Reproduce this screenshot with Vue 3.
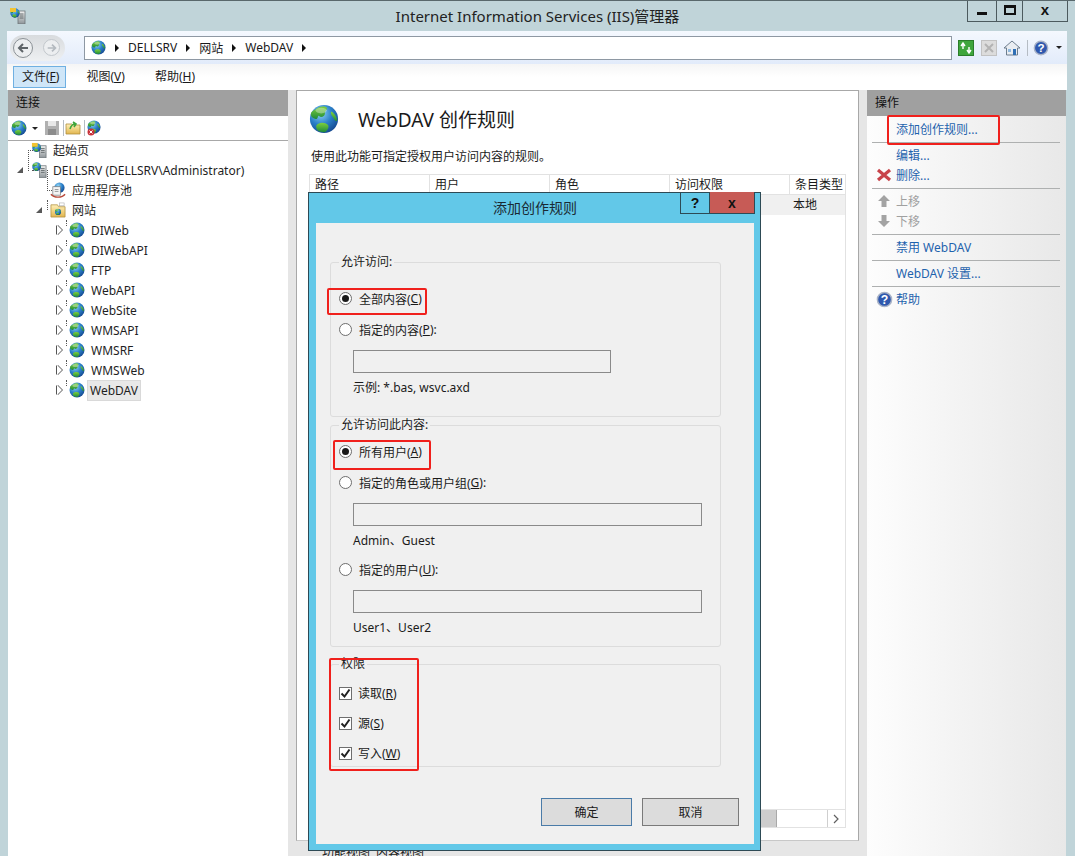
<template>
  <div class="window">
    <svg class="defs" width="0" height="0" aria-hidden="true">
      <defs>
        <radialGradient id="sea" cx="0.38" cy="0.3" r="0.8">
          <stop offset="0" stop-color="#8fd4f5" />
          <stop offset="0.5" stop-color="#2a7fc8" />
          <stop offset="1" stop-color="#123f86" />
        </radialGradient>
        <linearGradient id="land" x1="0" y1="0" x2="0" y2="1">
          <stop offset="0" stop-color="#7fd03c" />
          <stop offset="1" stop-color="#1f8a3a" />
        </linearGradient>
        <linearGradient id="boxfill" x1="0" y1="0" x2="0" y2="1">
          <stop offset="0" stop-color="#f2f2f2" />
          <stop offset="1" stop-color="#8d9498" />
        </linearGradient>
        <linearGradient id="folderfill" x1="0" y1="0" x2="0" y2="1">
          <stop offset="0" stop-color="#fff0b8" />
          <stop offset="1" stop-color="#e2b64f" />
        </linearGradient>
        <symbol id="globe" viewBox="0 0 32 32">
          <circle cx="16" cy="16" r="15" fill="url(#sea)" />
          <path d="M8 5c4-3 9-3 11-1 1 2-2 3-2 6s-4 5-6 3-1 4-4 3-5-2-5-5 3-4 6-6z" fill="url(#land)" />
          <path d="M24 8c3 2 6 6 6 10-2 1-3-1-4-3s-4-5-2-7z" fill="url(#land)" />
          <path d="M10 21c3-2 8-1 10 1s0 6-3 8c-4 0-8-1-9-4s0-4 2-5z" fill="url(#land)" />
          <ellipse cx="13" cy="7" rx="6" ry="3" fill="#fff" opacity=".35" />
        </symbol>
        <symbol id="server" viewBox="0 0 17 17">
          <rect x="9" y="4" width="7" height="13" fill="url(#boxfill)" stroke="#6d7478" stroke-width=".8" />
          <path d="M10.5 7h4M10.5 9h4M10.5 11h4" stroke="#4e5558" stroke-width=".8" />
          <use href="#globe" x="1" y="0" width="10" height="10" />
        </symbol>
        <symbol id="startpage" viewBox="0 0 17 17">
          <rect x="9" y="4" width="7" height="13" fill="url(#boxfill)" stroke="#6d7478" stroke-width=".8" />
          <path d="M10.5 7h4M10.5 9h4M10.5 11h4" stroke="#4e5558" stroke-width=".8" />
          <use href="#globe" x="1" y="1" width="10" height="10" />
          <path d="M1 1h6v4H1z" fill="#f2c432" />
        </symbol>
        <symbol id="pool" viewBox="0 0 17 17">
          <circle cx="10" cy="6" r="5.5" fill="url(#sea)" />
          <rect x="3" y="5" width="8" height="9" fill="#f4f4f4" stroke="#7b7f82" stroke-width=".8" />
          <path d="M5 8h4M5 10h4" stroke="#7b7f82" stroke-width=".8" />
          <path d="M1 13c3 4 12 4 15 0" fill="none" stroke="#b94a3a" stroke-width="1.4" />
        </symbol>
        <symbol id="sitefolder" viewBox="0 0 17 17">
          <path d="M1 3h7l1 2h7v11H1z" fill="url(#folderfill)" stroke="#b08f3f" stroke-width=".8" />
          <rect x="10" y="1" width="5" height="3" fill="#fff" stroke="#a9a9a9" stroke-width=".6" />
          <use href="#globe" x="5" y="7" width="7" height="7" />
        </symbol>
        <symbol id="help" viewBox="0 0 18 18">
          <circle cx="9" cy="9" r="7.5" fill="#2f58ae" stroke="#a9b3c7" stroke-width="1.6" />
          <text x="9" y="13.4" text-anchor="middle" class="help-q">?</text>
        </symbol>
      </defs>
    </svg>

    <header class="titlebar">
      <svg class="title-icon" width="17" height="17"><use href="#startpage" /></svg>
      <div class="title-text">Internet Information Services (IIS)管理器</div>
      <div class="win-controls">
        <button class="win-btn min"><span class="bar"></span></button>
        <button class="win-btn max"><span class="square"></span></button>
        <button class="win-btn close">x</button>
      </div>
    </header>

    <div class="navbar">
      <div class="nav-pill">
        <span class="nav-circle">
          <svg width="14" height="14" viewBox="0 0 14 14"><path d="M12 7H3M7 3 3 7l4 4" fill="none" stroke="#5e6468" stroke-width="2" /></svg>
        </span>
        <span class="nav-circle off">
          <svg width="12" height="12" viewBox="0 0 14 14"><path d="M2 7h9M7 3l4 4-4 4" fill="none" stroke="#b4bac0" stroke-width="2" /></svg>
        </span>
      </div>
      <div class="address">
        <svg width="15" height="15"><use href="#globe" /></svg>
        <template v-for="part in crumbs" :key="part">
          <span class="crumb-arrow"></span>
          <span class="crumb">{{ part }}</span>
        </template>
        <span class="crumb-arrow"></span>
      </div>
      <div class="nav-tools">
        <svg width="16" height="16" viewBox="0 0 16 16">
          <rect x=".5" y=".5" width="15" height="15" fill="#3fa63c" stroke="#2b7d2b" />
          <path d="M3 6l2-3 2 3M5 3v6M9 10l2 3 2-3M11 13V7" fill="none" stroke="#fff" stroke-width="1.4" />
        </svg>
        <svg width="16" height="16" viewBox="0 0 16 16">
          <rect x=".5" y=".5" width="15" height="15" fill="#dcdcdc" stroke="#c2c2c2" />
          <path d="M4 4l8 8M12 4l-8 8" stroke="#b3b3b3" stroke-width="2" />
        </svg>
        <svg width="16" height="16" viewBox="0 0 16 16">
          <path d="M8 1 0 8h2.500v7h11V8H16z" fill="#e9edf2" stroke="#6d7d8d" />
          <rect x="9" y="9" width="3" height="6" fill="#2f6fb5" />
          <rect x="4" y="9" width="3" height="3" fill="#8fb9df" />
        </svg>
        <span class="tool-sep"></span>
        <svg width="16" height="16"><use href="#help" /></svg>
        <span class="caret"></span>
      </div>
    </div>

    <nav class="menubar">
      <span class="menu-item active">文件(<u>F</u>)</span>
      <span class="menu-item">视图(<u>V</u>)</span>
      <span class="menu-item">帮助(<u>H</u>)</span>
    </nav>

    <div class="panes">
      <aside class="left-pane">
        <div class="pane-head">连接</div>
        <div class="left-tools">
          <svg width="16" height="16"><use href="#globe" /></svg>
          <span class="caret small"></span>
          <svg class="gap-l" width="16" height="16" viewBox="0 0 16 16">
            <rect x="1" y="1" width="14" height="14" fill="#b0b0b0" />
            <rect x="4" y="1" width="8" height="5" fill="#e8e8e8" />
            <rect x="4" y="9" width="8" height="6" fill="#8c8c8c" />
          </svg>
          <span class="tool-sep"></span>
          <svg width="16" height="16" viewBox="0 0 16 16">
            <path d="M1 4h6l1 1h7v9H1z" fill="url(#folderfill)" stroke="#b08f3f" stroke-width=".8" />
            <path d="M5 9c1-3 3-5 5-5M8 2l3 2-2 3" fill="none" stroke="#3fa63c" stroke-width="1.600" />
          </svg>
          <span class="tool-sep"></span>
          <svg width="17" height="16" viewBox="0 0 17 16">
            <use href="#globe" x="1" y="0" width="14" height="14" />
            <circle cx="5" cy="12" r="3.500" fill="#c8323a" />
            <path d="M3.500 10.500l3 3M6.500 10.500l-3 3" stroke="#fff" />
          </svg>
        </div>
        <div class="tree">
          <div v-for="node in treeNodes" :key="node.label" class="tree-row" :class="['level' + node.level, node.line]">
            <span class="twist" :class="node.twist"></span>
            <svg class="tree-icon" width="16" height="16"><use :href="'#' + node.icon" /></svg>
            <span class="tree-label" :class="{ selected: node.selected }">{{ node.label }}</span>
          </div>
        </div>
      </aside>

      <main class="center-col">
        <section class="center-pane">
          <div class="page-head">
            <svg width="30" height="32"><use href="#globe" /></svg>
            <h1>WebDAV 创作规则</h1>
          </div>
          <p class="page-desc">使用此功能可指定授权用户访问内容的规则。</p>
          <div class="rule-table">
            <div class="thead">
              <span v-for="col in columns" :key="col">{{ col }}</span>
            </div>
            <div class="tbody-row"><span class="cell-last">本地</span></div>
            <div class="table-fill"></div>
            <div class="hscroll">
              <span class="hscroll-thumb"></span>
              <span class="hscroll-track"></span>
              <span class="hscroll-btn">
                <svg width="7" height="10" viewBox="0 0 7 10"><path d="M1 1l4 4-4 4" fill="none" stroke="#606060" stroke-width="1.200" /></svg>
              </span>
            </div>
          </div>
        </section>
        <div class="view-tabs">
          <span class="view-tab">功能视图</span>
          <span class="view-tab">内容视图</span>
        </div>
      </main>

      <aside class="right-pane">
        <div class="pane-head">操作</div>
        <div class="actions">
          <template v-for="group in actionGroups" :key="group[0].label">
            <div class="action-group">
              <div v-for="item in group" :key="item.label" class="action" :class="{ disabled: item.disabled }">
                <span class="action-icon">
                  <svg v-if="item.icon === 'del'" width="16" height="16" viewBox="0 0 16 16">
                    <path d="M2 3l12 10M14 3 2 13" stroke="#c8434a" stroke-width="3.200" />
                  </svg>
                  <svg v-else-if="item.icon === 'up'" width="14" height="14" viewBox="0 0 14 14">
                    <path d="M7 1l6 6H9.500v6h-5V7H1z" fill="#a3a3a3" />
                  </svg>
                  <svg v-else-if="item.icon === 'down'" width="14" height="14" viewBox="0 0 14 14">
                    <path d="M7 13l6-6H9.500V1h-5v6H1z" fill="#a3a3a3" />
                  </svg>
                  <svg v-else-if="item.icon === 'help'" width="17" height="17"><use href="#help" /></svg>
                </span>
                <span>{{ item.label }}</span>
              </div>
            </div>
          </template>
        </div>
      </aside>
    </div>

    <section class="dialog">
      <div class="dlg-title">
        <span class="dlg-title-text">添加创作规则</span>
        <div class="dlg-btns">
          <button class="dlg-btn">?</button>
          <button class="dlg-btn dlg-close">x</button>
        </div>
      </div>
      <div class="dlg-body">
        <fieldset class="group g-access">
          <legend>允许访问:</legend>
          <label class="opt"><span class="radio on"></span>全部内容(<u>C</u>)</label>
          <label class="opt"><span class="radio"></span>指定的内容(<u>P</u>):</label>
          <div class="field narrow"></div>
          <div class="hint">示例: *.bas, wsvc.axd</div>
        </fieldset>
        <fieldset class="group g-users">
          <legend>允许访问此内容:</legend>
          <label class="opt"><span class="radio on"></span>所有用户(<u>A</u>)</label>
          <label class="opt"><span class="radio"></span>指定的角色或用户组(<u>G</u>):</label>
          <div class="field"></div>
          <div class="hint">Admin、Guest</div>
          <label class="opt after-hint"><span class="radio"></span>指定的用户(<u>U</u>):</label>
          <div class="field"></div>
          <div class="hint">User1、User2</div>
        </fieldset>
        <fieldset class="group g-perm">
          <legend>权限</legend>
          <label v-for="p in permissions" :key="p.key" class="opt">
            <span class="check">
              <svg width="11" height="11" viewBox="0 0 11 11"><path d="M1.500 5.500l3 3 5-7" fill="none" stroke="#222" stroke-width="2" /></svg>
            </span>{{ p.text }}(<u>{{ p.key }}</u>)
          </label>
        </fieldset>
        <div class="dlg-actions">
          <button class="push primary">确定</button>
          <button class="push">取消</button>
        </div>
      </div>
    </section>

    <span class="mark mark-add"></span>
    <span class="mark mark-all"></span>
    <span class="mark mark-users"></span>
    <span class="mark mark-perm"></span>
  </div>
</template>

<script setup>
const crumbs = ['DELLSRV', '网站', 'WebDAV']
const columns = ['路径', '用户', '角色', '访问权限', '条目类型']

const sites = ['DIWeb', 'DIWebAPI', 'FTP', 'WebAPI', 'WebSite', 'WMSAPI', 'WMSRF', 'WMSWeb', 'WebDAV']

const treeNodes = [
  { label: '起始页', level: 0, icon: 'startpage', line: 'line-start' },
  { label: 'DELLSRV (DELLSRV\\Administrator)', level: 0, icon: 'server', twist: 'open', line: 'line-server' },
  { label: '应用程序池', level: 1, icon: 'pool', line: 'line-pool' },
  { label: '网站', level: 1, icon: 'sitefolder', twist: 'open', line: 'line-sites' },
  ...sites.map((label) => ({
    label,
    level: 2,
    icon: 'globe',
    twist: 'closed',
    line: 'line-site',
    selected: label === 'WebDAV'
  }))
]

const actionGroups = [
  [{ label: '添加创作规则...' }],
  [{ label: '编辑...' }, { label: '删除...', icon: 'del' }],
  [{ label: '上移', icon: 'up', disabled: true }, { label: '下移', icon: 'down', disabled: true }],
  [{ label: '禁用 WebDAV' }],
  [{ label: 'WebDAV 设置...' }],
  [{ label: '帮助', icon: 'help' }]
]

const permissions = [
  { text: '读取', key: 'R' },
  { text: '源', key: 'S' },
  { text: '写入', key: 'W' }
]
</script>

<style>
html, body { margin: 0; padding: 0; overflow: hidden; }
</style>

<style scoped>
.window {
  position: relative;
  width: 1075px;
  height: 856px;
  overflow: hidden;
  display: flex;
  flex-direction: column;
  box-sizing: border-box;
  background: #c0d4d9;
  border-top: 1px solid #59686c;
  font-family: "Noto Sans", "Noto Sans CJK SC", sans-serif;
  font-size: 12px;
  color: #1a1a1a;
}
.defs { position: absolute; }
.help-q { font: bold 13px "Liberation Sans", sans-serif; fill: #fff; }

.titlebar {
  position: relative;
  height: 30px;
  flex: none;
  display: flex;
  align-items: center;
  padding-left: 9px;
}
.title-text {
  position: absolute;
  left: 0;
  right: 0;
  top: 5px;
  text-align: center;
  font-size: 15px;
  line-height: 20px;
  color: #222;
}
.title-icon { margin-top: -1px; }
.win-controls {
  position: absolute;
  right: 7px;
  top: -1px;
  display: flex;
  height: 22px;
  border: 1px solid #4c5a5e;
  border-top: 0;
  box-sizing: border-box;
}
.win-btn {
  border: 0;
  padding: 0;
  background: transparent;
  display: flex;
  align-items: center;
  justify-content: center;
  font: bold 15px "Liberation Sans", sans-serif;
  color: #111;
}
.win-btn + .win-btn { border-left: 1px solid #4c5a5e; }
.win-btn.min { width: 28px; }
.win-btn.max { width: 26px; }
.win-btn.close { width: 45px; padding-bottom: 3px; }
.bar { width: 10px; height: 3px; background: #111; margin-top: 5px; }
.square { width: 8px; height: 5px; border: 2px solid #111; border-top-width: 3px; margin-bottom: 2px; }

.navbar {
  flex: none;
  height: 33px;
  margin: 0 8px 0 7px;
  display: flex;
  align-items: center;
  background: linear-gradient(#f4f8fe, #e2ebfa);
  box-sizing: border-box;
  padding-left: 3px;
}
.nav-pill {
  width: 55px;
  height: 26px;
  border-radius: 13px;
  background: linear-gradient(#d8dbde, #eef0f2);
  display: flex;
  align-items: center;
  gap: 10px;
  padding-left: 3px;
  box-sizing: border-box;
}
.nav-circle {
  width: 20px;
  height: 20px;
  border: 1.500px solid #8b9196;
  border-radius: 50%;
  background: #eceef0;
  display: flex;
  align-items: center;
  justify-content: center;
  box-sizing: border-box;
}
.nav-circle.off { width: 17px; height: 17px; border-color: #c2c7cc; }
.address {
  margin-left: 19px;
  width: 868px;
  height: 24px;
  box-sizing: border-box;
  background: #fff;
  border: 1px solid #8e98a3;
  display: flex;
  align-items: center;
  padding-left: 6px;
}
.crumb-arrow {
  width: 0;
  height: 0;
  margin: 0 9px 0 9px;
  border-left: 4px solid #111;
  border-top: 4px solid transparent;
  border-bottom: 4px solid transparent;
}
.crumb { font-size: 12px; }
.nav-tools {
  margin-left: 6px;
  display: flex;
  align-items: center;
  gap: 7px;
}
.tool-sep { width: 1px; height: 16px; background: #b5bcc4; margin: 0 -2px 0 0; }
.caret {
  width: 0;
  height: 0;
  border-top: 3px solid #222;
  border-left: 3px solid transparent;
  border-right: 3px solid transparent;
}
.caret.small { margin-left: 2px; }

.menubar {
  flex: none;
  height: 26px;
  margin: 0 8px 0 7px;
  background: linear-gradient(#f5f5f5, #fff 50%);
  display: flex;
  align-items: center;
  padding-left: 6px;
  box-sizing: border-box;
  gap: 20px;
}
.menu-item { padding: 0 9px 0 8px; line-height: 20px; height: 20px; border: 1px solid transparent; margin-right: -9px; }
.menu-item.active { background: #cfe6f8; border-color: #6fb0e2; margin-right: -9px; padding: 0 6px 0 8px; margin-left: 0; }

.panes {
  flex: 1;
  min-height: 0;
  margin-left: 8px;
  margin-right: 9px;
  display: grid;
  grid-template-columns: 280px 8px 563px 8px 199px;
  background: #e6e6e6;
}
.left-pane { grid-column: 1; background: #fff; display: flex; flex-direction: column; }
.center-col { grid-column: 3; display: flex; flex-direction: column; min-height: 0; }
.right-pane {
  grid-column: 5;
  display: flex;
  flex-direction: column;
  background: linear-gradient(90deg, #fdfdfd, #e8e8e8);
}
.pane-head {
  height: 26px;
  flex: none;
  background: #a0a0a0;
  line-height: 26px;
  padding-left: 8px;
  color: #111;
}
.left-tools {
  height: 24px;
  flex: none;
  display: flex;
  align-items: center;
  padding-left: 3px;
  gap: 3px;
  border-bottom: 1px solid #a8a8a8;
}
.gap-l { margin-left: 3px; }

.tree { padding-top: 0; }
.tree-row {
  position: relative;
  height: 20px;
  display: flex;
  align-items: center;
  box-sizing: border-box;
  white-space: nowrap;
}
.tree-row:first-child { margin-top: -1px; }
.level0 { padding-left: 7px; }
.level1 { padding-left: 26px; }
.level2 { padding-left: 45px; }
.twist { width: 14px; height: 10px; flex: none; margin-right: 2px; position: relative; z-index: 1; }
.twist.open::before {
  content: "";
  position: absolute;
  left: 2px;
  top: 2px;
  border-bottom: 6px solid #595959;
  border-left: 6px solid transparent;
}
.twist.closed::before {
  content: "";
  position: absolute;
  left: 4px;
  top: 0;
  border-left: 5px solid #fff;
  border-top: 5px solid transparent;
  border-bottom: 5px solid transparent;
  filter: drop-shadow(1px 0 0 #555) drop-shadow(-1px 0 0 #555);
}
.tree-icon { flex: none; margin-right: 5px; position: relative; z-index: 1; }
.tree-label { line-height: 19px; padding: 0 1px; color: #1f1f1f; }
.tree-label.selected { background: #e8e8e8; border: 1px solid #d9d9d9; margin-left: -3px; padding: 0 2px; }
.tree-row::before, .tree-row::after { content: ""; position: absolute; }
.line-start::before { left: 20px; top: 10px; width: 10px; height: 20px; border-left: 1px dotted #555; border-top: 1px dotted #555; }
.line-server::before { left: 24px; top: 10px; width: 6px; border-top: 1px dotted #555; }
.line-pool::before { left: 39px; top: 0; width: 10px; height: 20px; border-left: 1px dotted #555; border-bottom: 1px dotted #555; transform: translateY(-10px); }
.line-sites::before { left: 39px; top: 0; height: 10px; border-left: 1px dotted #555; }
.line-sites::after { left: 46px; top: 10px; width: 4px; border-top: 1px dotted #555; }
.line-site::before { left: 58px; top: 0; height: 6px; border-left: 1px dotted #555; }
.line-site::after { left: 63px; top: 10px; width: 5px; border-top: 1px dotted #555; }

.center-pane {
  flex: 1;
  min-height: 0;
  background: #fff;
  border: 1px solid #a8a8a8;
  border-bottom-color: #c8c8c8;
  box-sizing: border-box;
  display: flex;
  flex-direction: column;
  padding: 12px 12px 12px 12px;
}
.page-head { display: flex; align-items: center; gap: 19px; height: 32px; }
.page-head h1 { margin: 0; font-size: 19px; font-weight: 400; color: #1a1a1a; }
.page-desc { margin: 14px 0 0 2px; line-height: 16px; }
.rule-table {
  flex: 1;
  min-height: 0;
  margin-top: 9px;
  border: 1px solid #e2e2e2;
  display: flex;
  flex-direction: column;
}
.thead {
  height: 19px;
  flex: none;
  display: grid;
  grid-template-columns: 120px 120px 120px 120px 1fr;
  border-bottom: 1px solid #e2e2e2;
  line-height: 19px;
}
.thead span { padding-left: 5px; border-right: 1px solid #e2e2e2; }
.thead span:last-child { border-right: 0; }
.tbody-row { height: 20px; flex: none; background: #f0f0f0; display: flex; justify-content: flex-end; line-height: 20px; }
.cell-last { width: 52px; }
.table-fill { flex: 1; }
.hscroll { height: 17px; flex: none; display: flex; border-top: 1px solid #e2e2e2; margin-top: auto; }
.hscroll-thumb { width: 466px; background: #cdcdcd; border-right: 1px solid #a9a9a9; }
.hscroll-track { flex: 1; }
.hscroll-btn { width: 17px; border-left: 1px solid #cfcfcf; display: flex; align-items: center; justify-content: center; }

.view-tabs {
  flex: none;
  height: 15px;
  display: flex;
  gap: 6px;
  padding-left: 26px;
  overflow: hidden;
}
.view-tab { line-height: 22px; padding-top: 1px; }

.actions { padding-top: 1px; }
.action-group { padding: 2px 0 3px; margin: 0 6px 0 5px; border-bottom: 1px solid #aeb0b0; }
.action-group:last-child { border-bottom: 0; }
.action {
  height: 20px;
  display: flex;
  align-items: center;
  color: #1f63ad;
}
.action.disabled { color: #a0a0a0; }
.action-icon { width: 24px; display: flex; justify-content: center; align-items: center; flex: none; margin-right: 0; }

.dialog {
  position: absolute;
  left: 308px;
  top: 191px;
  width: 453px;
  height: 659px;
  box-sizing: border-box;
  background: #62c8e8;
  border: 1px solid #2d4a55;
  display: flex;
  flex-direction: column;
  padding: 0 6px 6px 7px;
}
.dlg-title {
  position: relative;
  height: 30px;
  flex: none;
  text-align: center;
  line-height: 30px;
  font-size: 14px;
  color: #1a2a33;
}
.dlg-btns { position: absolute; right: -1px; top: -1px; height: 21px; display: flex; border: 1px solid #2d4a55; border-top: 0; }
.dlg-btn { width: 28px; border: 0; padding: 0; background: transparent; font: bold 14px "Liberation Sans", sans-serif; color: #111; }
.dlg-close { width: 45px; background: #c75b56; border-left: 1px solid #2d4a55; }
.dlg-body {
  flex: 1;
  min-height: 0;
  background: #f0f0f0;
  padding: 31px 33px 0 14px;
  display: flex;
  flex-direction: column;
  box-sizing: border-box;
}
.group {
  margin: 0;
  border: 1px solid #dcdcdc;
  border-radius: 3px;
  padding: 0 0 0 8px;
  box-sizing: border-box;
  display: flex;
  flex-direction: column;
}
.group legend { padding: 0 2px; line-height: 16px; margin-left: 0; }
.g-access { height: 163px; }
.g-users { height: 230px; }
.g-perm { height: 111px; margin-top: 9px; padding-top: 6px; }
.opt { display: flex; align-items: center; height: 31px; white-space: nowrap; }
.opt u { text-underline-offset: 1px; }
.g-access .opt:first-of-type { margin-top: 13px; }
.g-users .opt:first-of-type { margin-top: 3px; }
.g-perm .opt { height: 30px; }
.radio {
  width: 11px;
  height: 11px;
  border: 1px solid #6e6e6e;
  border-radius: 50%;
  background: #fff;
  margin-right: 7px;
  position: relative;
  flex: none;
}
.radio.on::after {
  content: "";
  position: absolute;
  left: 2px;
  top: 2px;
  width: 7px;
  height: 7px;
  border-radius: 50%;
  background: #1a1a1a;
}
.check {
  width: 11px;
  height: 11px;
  border: 1px solid #6e6e6e;
  background: #fff;
  margin-right: 6px;
  flex: none;
  display: flex;
}
.field {
  height: 23px;
  box-sizing: border-box;
  width: 349px;
  margin: 5px 0 0 14px;
  border: 1px solid #8a8a8a;
  background: #f0f0f0;
}
.field.narrow { width: 258px; }
.hint { margin: 7px 0 0 14px; line-height: 16px; }
.after-hint { margin-top: 5px; }
.dlg-actions {
  display: flex;
  margin-top: 31px;
  margin-right: -18px;
  justify-content: flex-end;
  gap: 10px;
}
.push {
  width: 97px;
  height: 28px;
  border: 1px solid #7a7a7a;
  background: #dcdcdc;
  font: 12px "Noto Sans", "Noto Sans CJK SC", sans-serif;
  color: #1a1a1a;
}
.push.primary { width: 91px; border-color: #4a7ba8; }

.mark {
  position: absolute;
  box-sizing: border-box;
  border: 2px solid #f0201c;
  border-radius: 2px;
  pointer-events: none;
}
.mark-add { left: 887px; top: 114px; width: 113px; height: 30px; }
.mark-all { left: 327px; top: 287px; width: 100px; height: 27px; }
.mark-users { left: 333px; top: 439px; width: 98px; height: 30px; }
.mark-perm { left: 329px; top: 657px; width: 90px; height: 113px; }
</style>
